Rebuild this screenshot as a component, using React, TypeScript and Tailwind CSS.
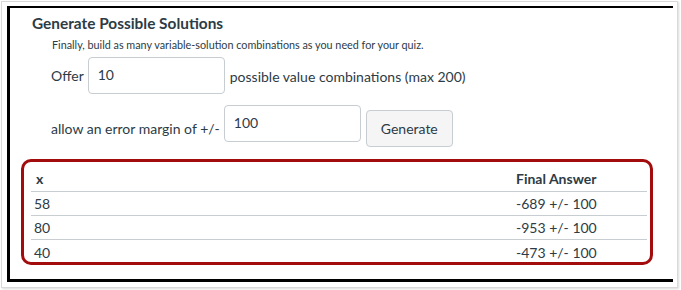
import React from 'react';

const rows = [
  { x: '58', answer: '-689 +/- 100' },
  { x: '80', answer: '-953 +/- 100' },
  { x: '40', answer: '-473 +/- 100' },
];

const App: React.FC = () => {
  return (
    <div className="w-[681px] h-[290px] bg-white pt-[1px] pl-[1px]" style={{ fontFamily: 'Lato, "Open Sans", sans-serif' }}>
      <div className="w-[677px] h-[287px] border border-[#d9d9d9] shadow-[1px_1px_2px_rgba(0,0,0,0.15)] pt-[4px] pl-[5px]">
        <div className="w-[666px] h-[276px] border-t-2 border-l-[3px] border-b-[3px] border-black text-[#2d3b45]">
          <h2 className="pl-[22px] pt-[5px] text-[15.4px] leading-[20px] font-bold">Generate Possible Solutions</h2>
          <p className="pl-[42px] mt-[5px] text-[10.8px] leading-[14px]">
            Finally, build as many variable-solution combinations as you need for your quiz.
          </p>

          <div className="flex items-center pl-[41px] mt-[5px] text-[14px]">
            <span>Offer</span>
            <div className="ml-[4px] w-[137px] h-[37px] border border-[#c7cdd1] rounded-[4px] pl-[9px] pt-[8px] leading-[18px]">10</div>
            <span className="ml-[5px] mt-[2px]">possible value combinations (max 200)</span>
          </div>

          <div className="flex items-start pl-[41px] mt-[11px] text-[14px]">
            <span className="mt-[13px]">allow an error margin of +/-</span>
            <div className="ml-[4px] w-[137px] h-[37px] border border-[#c7cdd1] rounded-[4px] pl-[9px] pt-[8px] leading-[18px]">100</div>
            <button className="ml-[5px] mt-[5px] w-[87px] h-[37px] bg-[#f5f5f5] border border-[#c7cdd1] rounded-[4px] text-[14px]">
              Generate
            </button>
          </div>

          <div className="ml-[11px] mt-[12px] w-[632px] h-[106px] border-[3px] border-[#a30c0c] rounded-[10px] pl-[7px] pr-[3px]">
            <div className="flex h-[30px] items-end pb-[2px] border-b border-[#c7cdd1] text-[14px] font-bold">
              <div className="flex-1 pl-[5px]">x</div>
              <div className="w-[131px]">Final Answer</div>
            </div>
            {rows.map((r, i) => (
              <div
                key={r.x}
                className={`flex items-center h-[24px] text-[14px] ${i < rows.length - 1 ? 'border-b border-[#c7cdd1]' : ''}`}
              >
                <div className="flex-1 pl-[3px]">{r.x}</div>
                <div className="w-[131px]">{r.answer}</div>
              </div>
            ))}
          </div>
        </div>
      </div>
    </div>
  );
};

export default App;
